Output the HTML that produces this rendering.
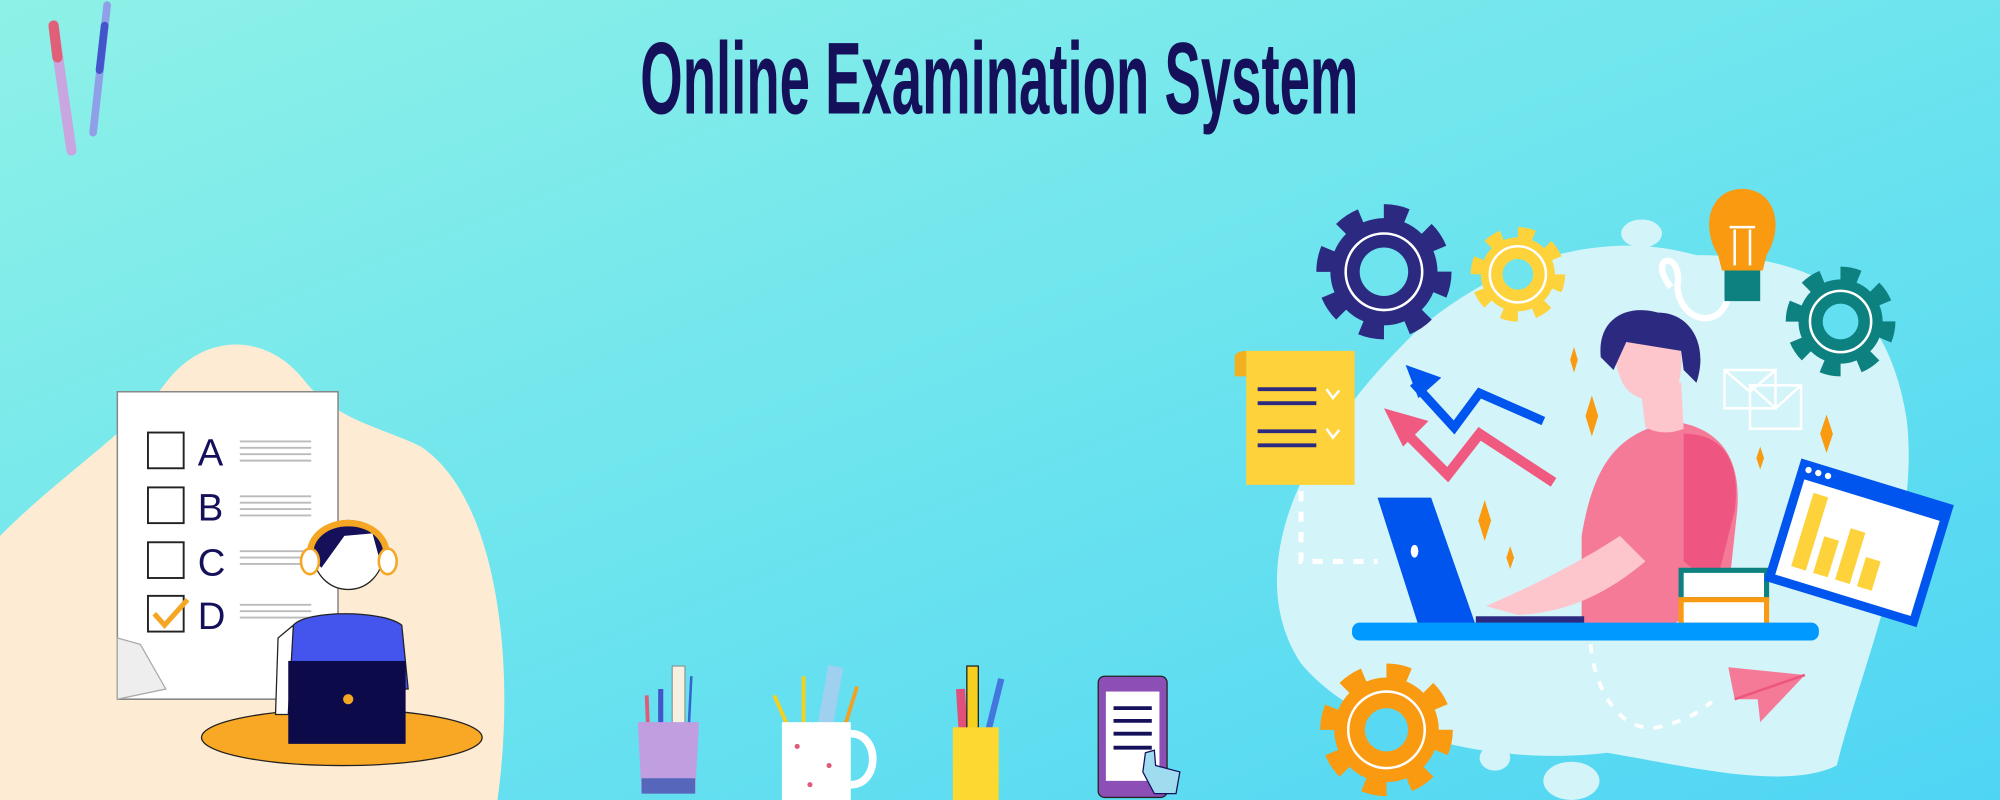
<!DOCTYPE html>
<html><head><meta charset="utf-8"><style>
html,body{margin:0;padding:0;width:2000px;height:800px;overflow:hidden}
svg{display:block}
</style></head><body>
<svg width="2000" height="800" viewBox="0 0 1568 627" preserveAspectRatio="none" xmlns="http://www.w3.org/2000/svg">
<defs>
<linearGradient id="bg" x1="0" y1="0" x2="1" y2="1">
<stop offset="0" stop-color="#8ef1e7"/><stop offset="0.5" stop-color="#6de4ee"/><stop offset="1" stop-color="#4fd5f4"/>
</linearGradient>
</defs>
<rect width="1568" height="627" fill="url(#bg)"/>
<!-- title -->
<text x="502" y="89" textLength="563" lengthAdjust="spacingAndGlyphs" font-family="'Liberation Sans Narrow','Liberation Sans',sans-serif" font-weight="bold" font-size="80" fill="#15105a">Online Examination System</text>
<!-- pens -->
<g stroke-linecap="round">
<line x1="42" y1="20" x2="56" y2="118" stroke="#c9a6e0" stroke-width="8"/>
<line x1="42" y1="20" x2="45" y2="45" stroke="#e0607a" stroke-width="8"/>
<line x1="84" y1="4" x2="73" y2="104" stroke="#8fa0e8" stroke-width="6"/>
<line x1="82" y1="20" x2="78" y2="55" stroke="#4455cc" stroke-width="6"/>
</g>
<!-- left blob -->
<path d="M0 420 C50 370 100 340 130 300 C160 260 210 260 240 300 C265 330 300 335 330 350 C390 390 405 520 390 627 L0 627 Z" fill="#fdecd3"/>
<!-- paper -->
<path d="M92 307 H265 V548 H92 Z" fill="#fff" stroke="#888" stroke-width="1.2"/>
<path d="M92 500 L110 505 L130 540 L92 548 Z" fill="#eee" stroke="#aaa"/>
<g fill="#fff" stroke="#222" stroke-width="1.5">
<rect x="116" y="339" width="28" height="28"/><rect x="116" y="382" width="28" height="28"/><rect x="116" y="425" width="28" height="28"/><rect x="116" y="467" width="28" height="28"/>
</g>
<path d="M121 481 L129 490 L147 470" fill="none" stroke="#f5a623" stroke-width="4"/>
<g font-family="'Liberation Sans',sans-serif" font-size="30" fill="#15105a">
<text x="155" y="365">A</text><text x="155" y="408">B</text><text x="155" y="451">C</text><text x="155" y="493">D</text>
</g>
<g stroke="#bbb" stroke-width="1.5">
<path d="M188 346H244M188 351H244M188 356H244M188 361H244M188 389H244M188 394H244M188 399H244M188 404H244M188 432H244M188 437H244M188 442H244M188 474H244M188 479H244M188 484H244"/>
</g>
<!-- person left -->
<ellipse cx="268" cy="578" rx="110" ry="22" fill="#f8a824" stroke="#222"/>
<path d="M230 490 C240 478 300 478 315 490 L320 540 L226 540 Z" fill="#4455ee" stroke="#222"/>
<path d="M218 500 L230 490 L226 560 L216 560 Z" fill="#fff" stroke="#222"/>
<circle cx="273" cy="435" r="27" fill="#fff" stroke="#222"/>
<path d="M247 440 C240 400 300 398 302 430 L298 440 L292 418 L270 420 L252 445 Z" fill="#15105a"/>
<path d="M243 440 C238 400 308 400 303 440" fill="none" stroke="#f5a623" stroke-width="5"/>
<ellipse cx="243" cy="440" rx="7" ry="10" fill="#fff" stroke="#f5a623" stroke-width="2"/>
<ellipse cx="304" cy="440" rx="7" ry="10" fill="#fff" stroke="#f5a623" stroke-width="2"/>
<rect x="226" y="518" width="92" height="65" fill="#0d0a4a"/>
<circle cx="273" cy="548" r="4" fill="#f5a623"/>
<!-- cups -->
<g>
<line x1="507" y1="545" x2="508" y2="570" stroke="#e05a7a" stroke-width="3"/>
<line x1="518" y1="540" x2="518" y2="570" stroke="#4455cc" stroke-width="4"/>
<rect x="527" y="522" width="10" height="48" fill="#f5f0e0" stroke="#888" stroke-width="0.8"/>
<line x1="542" y1="530" x2="540" y2="570" stroke="#3366cc" stroke-width="2"/>
<path d="M500 566 H548 L545 622 H503 Z" fill="#c09ee0"/>
<path d="M503 610 H545 L545 622 H503Z" fill="#5566bb"/>
<line x1="607" y1="545" x2="618" y2="570" stroke="#f5d020" stroke-width="3"/>
<line x1="630" y1="530" x2="630" y2="570" stroke="#f5d020" stroke-width="3"/>
<rect x="645" y="522" width="12" height="48" fill="#9fd0f0" transform="rotate(10 651 546)"/>
<line x1="672" y1="538" x2="662" y2="570" stroke="#f5a020" stroke-width="3"/>
<path d="M667 575 C690 575 690 615 667 615" fill="none" stroke="#fff" stroke-width="6"/>
<rect x="613" y="566" width="54" height="61" fill="#fff"/>
<g fill="#e05a7a"><circle cx="625" cy="585" r="2"/><circle cx="650" cy="600" r="2"/><circle cx="635" cy="615" r="2"/></g>
<line x1="753" y1="540" x2="755" y2="572" stroke="#e0507a" stroke-width="7"/>
<rect x="758" y="522" width="9" height="50" fill="#f5d020" stroke="#222" stroke-width="1"/>
<line x1="785" y1="532" x2="775" y2="572" stroke="#4477dd" stroke-width="5"/>
<rect x="747" y="570" width="36" height="57" fill="#fcd930"/>
<rect x="861" y="530" width="54" height="95" rx="5" fill="#8b4fb5" stroke="#222"/>
<rect x="867" y="542" width="42" height="70" fill="#fff"/>
<g stroke="#15105a" stroke-width="3"><path d="M873 555H903M873 565H903M873 575H903M873 586H903"/></g>
<path d="M898 590 L905 588 L906 600 L925 605 L922 622 L905 622 L896 605Z" fill="#9fdcf0" stroke="#15105a"/>
</g>
<!-- right blob -->
<path d="M1110 260 C1180 200 1260 180 1330 200 C1420 200 1480 230 1495 330 C1505 420 1460 520 1440 600 C1400 620 1320 600 1260 590 C1180 600 1070 580 1020 520 C980 460 1010 380 1050 330 C1070 300 1090 280 1110 260Z" fill="#d3f4f9"/>
<ellipse cx="1287" cy="183" rx="16" ry="11" fill="#d3f4f9"/>
<ellipse cx="1172" cy="594" rx="12" ry="10" fill="#d3f4f9"/>
<ellipse cx="1232" cy="612" rx="22" ry="15" fill="#d3f4f9"/>
<!-- gears -->
<circle cx="1085" cy="213" r="42" fill="#2c2a80"/>
<circle cx="1085" cy="213" r="46" fill="none" stroke="#2c2a80" stroke-width="14" stroke-dasharray="18 18.1"/>
<circle cx="1085" cy="213" r="30" fill="none" stroke="#fff" stroke-width="2"/>
<circle cx="1085" cy="213" r="19" fill="#6de4ee"/>
<circle cx="1190" cy="215" r="29" fill="#fdd23a"/>
<circle cx="1190" cy="215" r="32" fill="none" stroke="#fdd23a" stroke-width="10" stroke-dasharray="12.5 12.6"/>
<circle cx="1190" cy="215" r="22" fill="none" stroke="#fff" stroke-width="2"/>
<circle cx="1190" cy="215" r="12" fill="#6de4ee"/>
<circle cx="1443" cy="252" r="33" fill="#0d8080"/>
<circle cx="1443" cy="252" r="37" fill="none" stroke="#0d8080" stroke-width="12" stroke-dasharray="14.5 14.5"/>
<circle cx="1443" cy="252" r="24" fill="none" stroke="#fff" stroke-width="2"/>
<circle cx="1443" cy="252" r="14" fill="#62dff0"/>
<circle cx="1087" cy="572" r="41" fill="#f99a10"/>
<circle cx="1087" cy="572" r="45" fill="none" stroke="#f99a10" stroke-width="14" stroke-dasharray="17.6 17.7"/>
<circle cx="1087" cy="572" r="30" fill="none" stroke="#fff" stroke-width="2"/>
<circle cx="1087" cy="572" r="17" fill="#58d8f2"/>
<!-- bulb -->
<path d="M1310 225 C1290 200 1320 195 1315 225 C1318 255 1352 258 1355 230" fill="none" stroke="#fff" stroke-width="5"/>
<path d="M1366 148 C1390 148 1400 175 1385 200 L1382 212 H1350 L1347 200 C1332 175 1342 148 1366 148Z" fill="#f99a10"/>
<rect x="1352" y="212" width="28" height="24" fill="#0d8080"/>
<path d="M1360 180V208M1372 180V208M1356 178H1376" stroke="#fff" stroke-width="2" fill="none"/>
<!-- note -->
<rect x="977" y="275" width="85" height="105" fill="#fdd23a"/>
<path d="M968 280 C968 275 977 275 977 275 V295 H968Z" fill="#f0b020"/>
<g stroke="#2c2a80" stroke-width="3"><path d="M986 305H1032M986 316H1032M986 338H1032M986 349H1032"/></g>
<path d="M1040 305 L1045 312 L1050 306 M1040 336 L1045 343 L1050 337" stroke="#fff" stroke-width="2" fill="none"/>
<!-- arrows -->
<path d="M1108 300 L1140 335 L1160 308 L1210 330" fill="none" stroke="#0055ee" stroke-width="7"/>
<path d="M1102 286 L1130 296 L1112 312Z" fill="#0055ee"/>
<path d="M1098 335 L1135 372 L1160 340 L1218 378" fill="none" stroke="#f05a80" stroke-width="8"/>
<path d="M1085 320 L1120 330 L1100 350Z" fill="#f05a80"/>
<!-- sparkles -->
<g fill="#f99a10">
<path d="M1234 272 l3 10 l-3 10 l-3 -10Z"/><path d="M1248 310 l5 16 l-5 16 l-5 -16Z"/><path d="M1164 392 l5 16 l-5 16 l-5 -16Z"/><path d="M1184 428 l3 9 l-3 9 l-3 -9Z"/><path d="M1380 350 l3 9 l-3 9 l-3 -9Z"/><path d="M1432 325 l5 15 l-5 15 l-5 -15Z"/>
</g>
<!-- envelopes -->
<g fill="none" stroke="#fff" stroke-width="2"><rect x="1352" y="290" width="40" height="30"/><path d="M1352 290 L1372 307 L1392 290"/><rect x="1372" y="302" width="40" height="34"/><path d="M1372 302 L1392 320 L1412 302"/></g>
<!-- person right -->
<path d="M1240 420 C1250 360 1270 340 1310 330 C1350 335 1365 360 1362 400 L1355 465 L1310 490 L1240 490Z" fill="#f57a98"/>
<path d="M1320 340 C1350 340 1365 360 1360 400 L1345 460 L1320 440Z" fill="#ee5580"/>
<path d="M1290 335 L1285 295 L1318 300 L1320 336 C1310 340 1300 340 1290 335Z" fill="#fcc6cc"/>
<path d="M1268 290 C1262 262 1275 245 1300 250 C1318 255 1322 280 1315 305 C1300 318 1280 315 1272 300Z" fill="#fcc6cc"/>
<path d="M1255 280 C1252 250 1275 238 1300 245 C1325 245 1340 270 1330 300 L1320 290 L1318 275 L1275 268 L1265 290Z" fill="#2c2a80"/>
<path d="M1165 475 C1200 460 1240 440 1270 420 L1290 440 C1260 465 1230 480 1190 482Z" fill="#fcc6cc"/>
<path d="M1080 390 H1122 L1157 490 H1112Z" fill="#0055ee"/>
<ellipse cx="1109" cy="432" rx="3" ry="5" fill="#fff"/>
<rect x="1157" y="483" width="85" height="7" fill="#2c2a80"/>
<path d="M1318 447 H1385 V470 H1318Z" fill="#fff" stroke="#0d8080" stroke-width="4"/>
<path d="M1318 470 H1385 V490 H1318Z" fill="#fff" stroke="#f99a10" stroke-width="4"/>
<rect x="1060" y="488" width="366" height="14" rx="6" fill="#0099ff"/>
<!-- chart window -->
<g transform="rotate(17 1456 425)">
<rect x="1395" y="375" width="125" height="100" fill="#0055ee"/>
<rect x="1402" y="390" width="111" height="78" fill="#fff"/>
<g fill="#fdd23a"><rect x="1412" y="398" width="12" height="60"/><rect x="1430" y="428" width="12" height="30"/><rect x="1448" y="416" width="12" height="42"/><rect x="1466" y="434" width="12" height="24"/></g>
<g fill="#fff"><circle cx="1403" cy="382" r="2.5"/><circle cx="1411" cy="382" r="2.5"/><circle cx="1419" cy="382" r="2.5"/></g>
</g>
<!-- dashed lines -->
<path d="M1020 385 V440 H1080" fill="none" stroke="#fff" stroke-width="4" stroke-dasharray="8 8"/>
<path d="M1247 505 C1250 540 1270 575 1300 570 C1320 565 1330 560 1342 550" fill="none" stroke="#fff" stroke-width="3" stroke-dasharray="7 8"/>
<!-- plane -->
<path d="M1355 523 L1415 529 L1380 566 L1378 548 L1360 548Z" fill="#f57a98"/>
<path d="M1360 548 L1415 529" stroke="#ee5580" stroke-width="2"/>
</svg>
</body></html>
